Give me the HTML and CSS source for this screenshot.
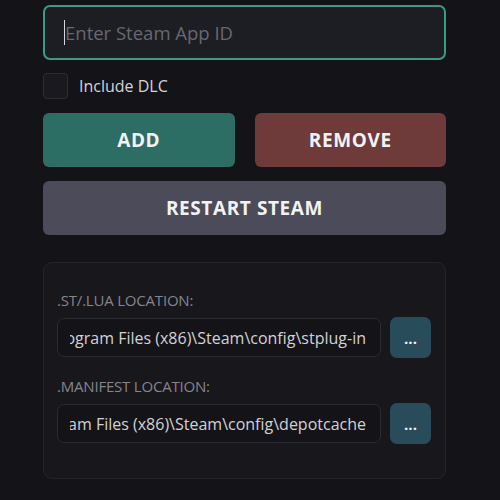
FILE: index.html
```html
<!DOCTYPE html>
<html>
<head>
<meta charset="utf-8">
<link rel="stylesheet" href="styles.css">
</head>
<body>
<div class="app">
  <div class="appid">
    <span class="caret"></span><span class="placeholder">Enter Steam App ID</span>
  </div>
  <label class="dlc">
    <span class="box"></span>
    <span class="dlc-text">Include DLC</span>
  </label>
  <div class="row">
    <button class="btn add">ADD</button>
    <button class="btn remove">REMOVE</button>
  </div>
  <button class="btn restart">RESTART STEAM</button>
  <div class="panel">
    <div class="label">.ST/.LUA LOCATION:</div>
    <div class="path-row">
      <div class="path"><div class="path-clip"><span>C:\Program Files (x86)\Steam\config\stplug-in</span></div></div>
      <button class="browse">...</button>
    </div>
    <div class="label">.MANIFEST LOCATION:</div>
    <div class="path-row">
      <div class="path"><div class="path-clip"><span>C:\Program Files (x86)\Steam\config\depotcache</span></div></div>
      <button class="browse">...</button>
    </div>
  </div>
</div>
</body>
</html>
```
FILE: styles.css
```css
html, body {
  margin: 0;
  padding: 0;
  background: #131318;
  font-family: "Open Sans", "Noto Sans", sans-serif;
}
.app {
  width: 403px;
  margin-left: 43px;
  padding-top: 5px;
  display: flex;
  flex-direction: column;
}
.appid {
  box-sizing: border-box;
  height: 55px;
  border: 2px solid #3a9a88;
  border-radius: 7px;
  background: #1d1d24;
  display: flex;
  align-items: center;
  padding-left: 19px;
}
.caret {
  width: 1px;
  height: 25px;
  background: #d8d8d8;
}
.placeholder {
  color: #686870;
  font-size: 18.5px;
}
.dlc {
  display: flex;
  align-items: center;
  margin-top: 13px;
  height: 26px;
}
.box {
  box-sizing: border-box;
  width: 25px;
  height: 26px;
  border: 1px solid #2c2c34;
  border-radius: 4px;
  background: #19191f;
}
.dlc-text {
  margin-left: 11px;
  color: #d4d4d8;
  font-size: 16px;
}
.row {
  display: flex;
  gap: 20px;
  margin-top: 14px;
}
.btn {
  border: none;
  border-radius: 6px;
  height: 54px;
  color: #f2f2f2;
  font-family: "Open Sans", "Noto Sans", sans-serif;
  font-weight: 700;
  font-size: 19px;
  letter-spacing: 0.6px;
  padding: 0;
}
.row .btn { flex: 1; }
.add { background: #2c6e63; }
.remove { background: #6f3a3a; }
.restart {
  background: #4b4b59;
  margin-top: 14px;
}
.panel {
  box-sizing: border-box;
  margin-top: 27px;
  height: 217px;
  border: 1px solid #24242b;
  border-radius: 9px;
  background: #17171c;
  padding: 27px 14px 0 13px;
}
.label {
  color: #85858d;
  font-size: 15px;
  letter-spacing: -0.2px;
  line-height: 20px;
}
.path-row {
  display: flex;
  align-items: center;
  gap: 9px;
  margin-top: 7px;
  margin-bottom: 18px;
}
.path {
  box-sizing: border-box;
  width: 324px;
  height: 39px;
  border: 1px solid #2a2a31;
  border-radius: 7px;
  background: #141418;
  padding: 0 14px 0 12px;
  display: flex;
  align-items: center;
}
.path-clip {
  flex: 1;
  overflow: hidden;
  display: flex;
  justify-content: flex-end;
  white-space: nowrap;
  color: #d2d2d6;
  font-size: 16px;
}
.path-clip span { flex: none; }
.browse {
  width: 42px;
  height: 41px;
  border: none;
  border-radius: 7px;
  background: #284c5a;
  color: #f2f2f2;
  font-family: "Open Sans", sans-serif;
  font-weight: 700;
  font-size: 15px;
  padding: 0;
}
```
